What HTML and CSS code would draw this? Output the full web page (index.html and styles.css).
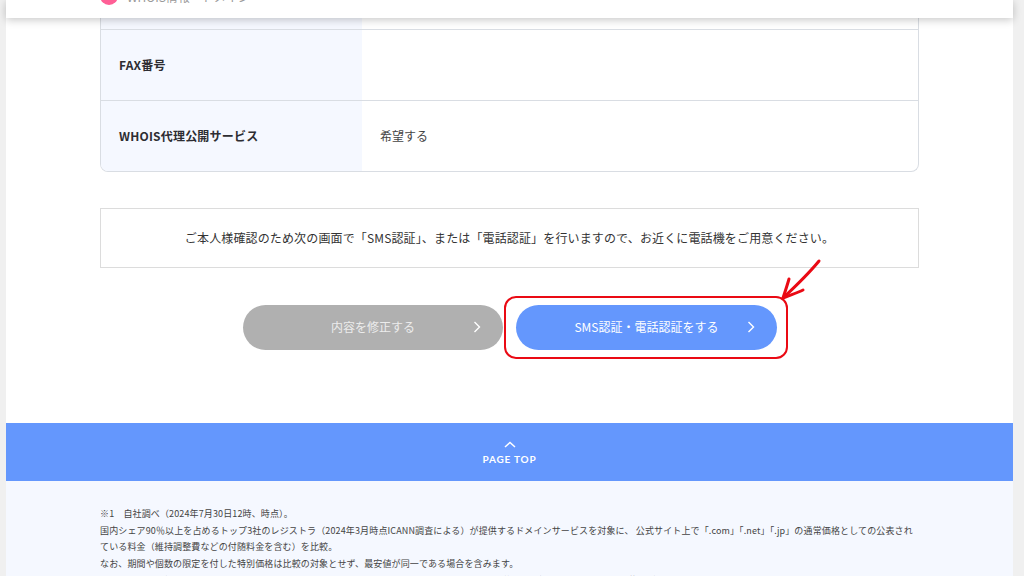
FILE: index.html
```html
<!DOCTYPE html>
<html lang="ja">
<head>
    <meta charset="UTF-8">
    <meta name="viewport" content="width=device-width, initial-scale=1.0">
    <title>入力内容の確認</title>
    <link rel="stylesheet" href="styles.css">
</head>
<body>
    <div class="page">
        <header class="top-bar">
            <span class="top-dot"></span>
            <span class="top-text">WHOIS情報・ドメイン</span>
        </header>

        <main class="content">
            <div class="info-table">
                <div class="info-row info-row-cut">
                    <div class="info-label"></div>
                    <div class="info-value"></div>
                </div>
                <div class="info-row">
                    <div class="info-label">FAX番号</div>
                    <div class="info-value"></div>
                </div>
                <div class="info-row">
                    <div class="info-label">WHOIS代理公開サービス</div>
                    <div class="info-value">希望する</div>
                </div>
            </div>

            <div class="notice">ご本人様確認のため次の画面で「SMS認証」、または「電話認証」を行いますので、お近くに電話機をご用意ください。</div>

            <div class="actions">
                <a class="btn btn-gray">内容を修正する
                    <svg class="btn-arrow" viewBox="0 0 8 12"><path d="M1.5 1 L6.5 6 L1.5 11"/></svg>
                </a>
                <a class="btn btn-blue">SMS認証・電話認証をする
                    <svg class="btn-arrow" viewBox="0 0 8 12"><path d="M1.5 1 L6.5 6 L1.5 11"/></svg>
                </a>
                <div class="red-box"></div>
                <svg class="red-arrow" viewBox="0 0 50 50">
                    <path d="M45 3 C36 14 24 26 9 40"/>
                    <path d="M15 21 C13 28 11 34 9 40 C16 37 23 35 29 32"/>
                </svg>
            </div>
        </main>

        <a class="page-top">
            <svg class="page-top-icon" viewBox="0 0 12 7"><path d="M1 6 L6 1.5 L11 6"/></svg>
            <span>PAGE TOP</span>
        </a>

        <footer class="notes">
            <p>※1　自社調べ（2024年7月30日12時、時点）。</p>
            <p>国内シェア90％以上を占めるトップ3社のレジストラ（2024年3月時点ICANN調査による）が提供するドメインサービスを対象に、 公式サイト上で「.com」「.net」「.jp」の通常価格としての公表され<br>ている料金（維持調整費などの付随料金を含む）を比較。</p>
            <p>なお、期間や個数の限定を付した特別価格は比較の対象とせず、最安値が同一である場合を含みます。</p>
            <p>　　　また、取得時の価格のみを比較するものであり、更新時の料金などは含まれておりません。詳しくは各社の公式サイトの記載をご確認いただきますようお願いいたします。</p>
        </footer>
    </div>
</body>
</html>
```

FILE: styles.css
```css
html, body{
    height: 100%;
    margin: 0;
    overflow: hidden;
    background-color: #f0f0f0;
}
body{
    font-family: "Noto Sans CJK JP", "Noto Sans", sans-serif;
    color: #333;
}
.page{
    position: relative;
    width: 1007px;
    margin-left: 6px;
    background-color: #fff;
}

.top-bar{
    position: absolute;
    top: 0;
    left: 0;
    right: 0;
    z-index: 5;
    height: 18px;
    box-sizing: border-box;
    padding: 0 0 13px 94px;
    display: flex;
    align-items: flex-end;
    overflow: hidden;
    background-color: #fff;
    box-shadow: 0 2px 9px rgba(0, 0, 0, 0.22);
}
.top-dot{
    flex: none;
    width: 18px;
    height: 18px;
    border-radius: 50%;
    background-color: #ff5f96;
}
.top-text{
    flex: none;
    margin-left: 9px;
    margin-bottom: 0;
    font-size: 12px;
    line-height: 16px;
    color: #999;
}

.content{
    padding: 0 94px 73px;
}
.info-table{
    border: 1px solid #d9dde3;
    border-top: 0;
    border-radius: 0 0 8px 8px;
    overflow: hidden;
}
.info-row{
    display: flex;
    height: 71px;
    box-sizing: border-box;
    border-bottom: 1px solid #d9dde3;
    font-size: 12px;
}
.info-row:last-child{
    height: 70px;
    border-bottom: 0;
}
.info-row-cut{
    height: 30px;
}
.info-label{
    width: 261px;
    box-sizing: border-box;
    padding: 0 0 2px 18px;
    display: flex;
    align-items: center;
    font-weight: 700;
    letter-spacing: 0.2px;
    color: #2d2d32;
    background-color: #f5f8ff;
}
.info-value{
    flex: 1;
    padding: 0 0 2px 18px;
    display: flex;
    align-items: center;
    color: #444;
}

.notice{
    margin-top: 36px;
    height: 60px;
    box-sizing: border-box;
    padding-bottom: 2px;
    display: flex;
    align-items: center;
    justify-content: center;
    border: 1px solid #dcdcdc;
    font-size: 12px;
    letter-spacing: 0.14px;
    color: #333;
}

.actions{
    position: relative;
    margin-top: 37px;
    padding-left: 1px;
    display: flex;
    justify-content: center;
    gap: 13px;
}
.btn{
    position: relative;
    width: 261px;
    height: 45px;
    box-sizing: border-box;
    padding-bottom: 2px;
    border-radius: 23px;
    display: flex;
    align-items: center;
    justify-content: center;
    font-size: 12px;
    color: #fff;
}
.btn-gray{
    width: 260px;
    background-color: #b0b0b0;
    color: #ececec;
}
.btn-blue{
    background-color: #6497fd;
}
.btn-arrow{
    position: absolute;
    right: 22px;
    top: 16px;
    width: 8px;
    height: 12px;
    fill: none;
    stroke: #fff;
    stroke-width: 1.4;
}
/* annotation drawn over the screenshot */
.red-box{
    position: absolute;
    left: 404px;
    top: -9px;
    width: 280px;
    height: 59px;
    border: 2.5px solid #ea0a14;
    border-radius: 12px;
}
.red-arrow{
    position: absolute;
    left: 674px;
    top: -47px;
    width: 50px;
    height: 50px;
    fill: none;
    stroke: #ea0a14;
    stroke-width: 3;
    stroke-linecap: round;
    stroke-linejoin: round;
}

.page-top{
    height: 58px;
    box-sizing: border-box;
    padding-top: 18px;
    display: flex;
    flex-direction: column;
    align-items: center;
    background-color: #6497fd;
    color: #fff;
    font-family: "Lato", "Noto Sans", sans-serif;
    font-size: 10px;
    font-weight: 700;
    letter-spacing: 0.8px;
    line-height: 12px;
}
.page-top-icon{
    width: 12px;
    height: 7px;
    margin-bottom: 5px;
    fill: none;
    stroke: #fff;
    stroke-width: 1.5;
}

.notes{
    padding: 25px 94px 20px;
    background-color: #f5f8ff;
    font-size: 9px;
    line-height: 16.7px;
    letter-spacing: 0.13px;
    color: #444;
}
.notes p{
    margin: 0;
}
```
